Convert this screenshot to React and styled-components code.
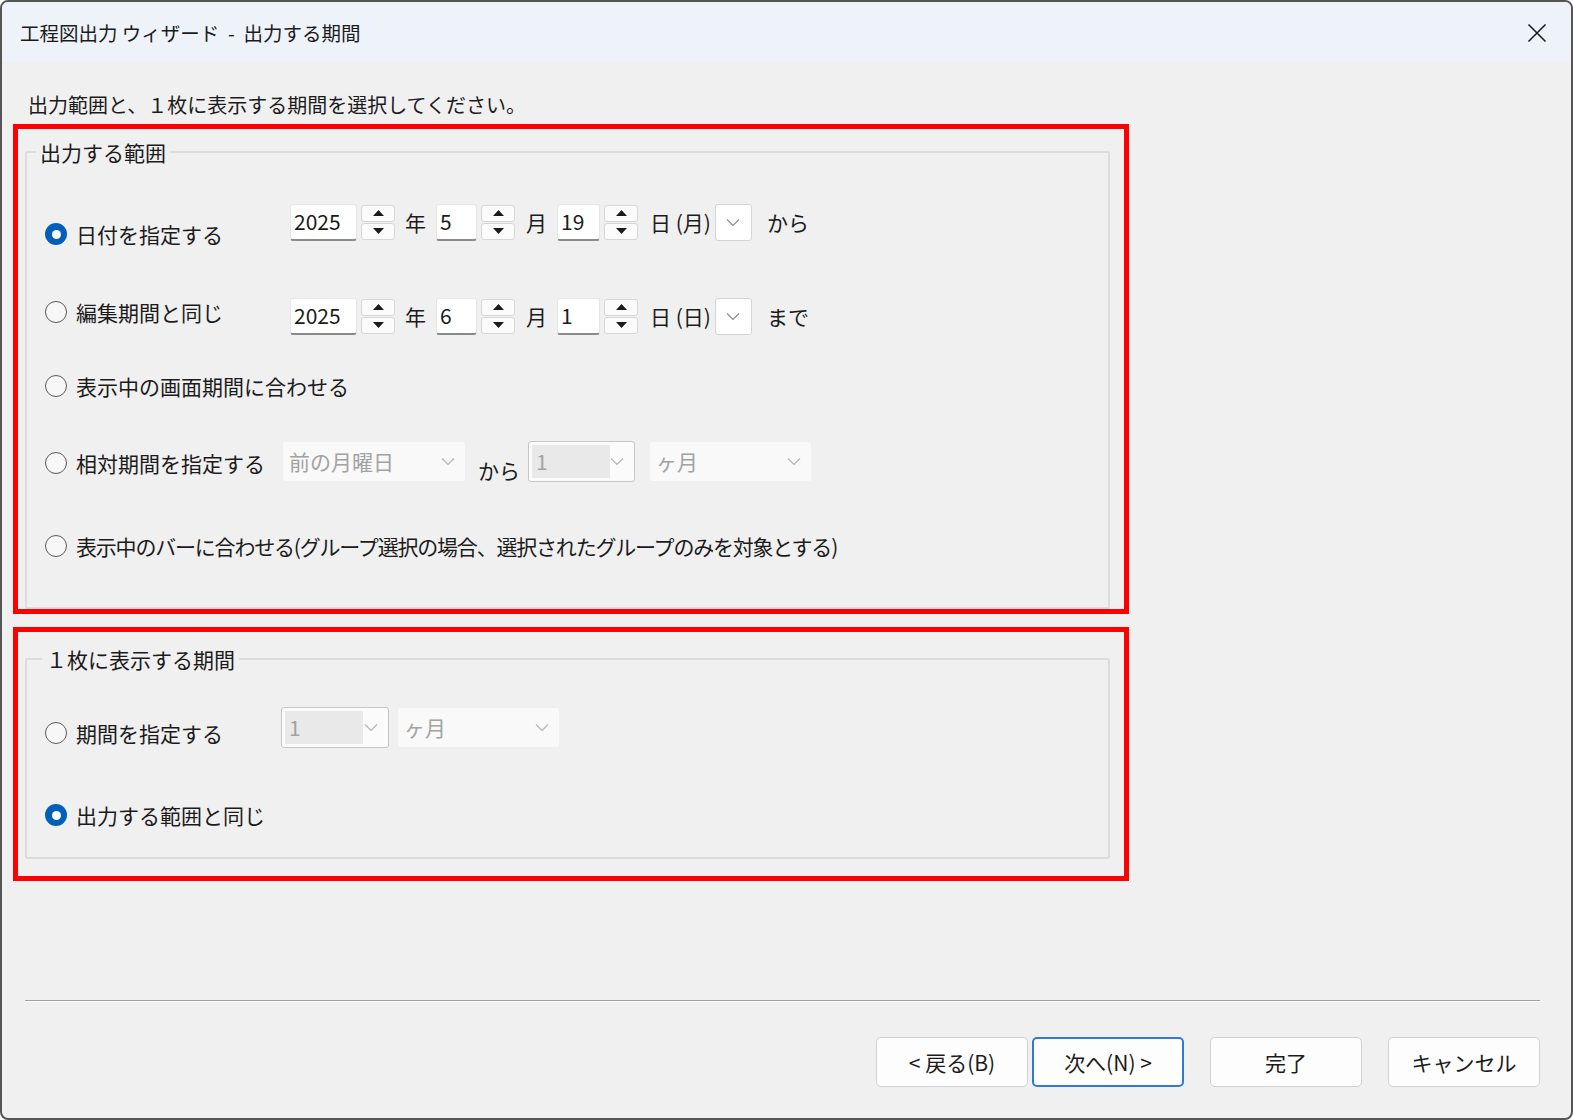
import React from 'react'
import styled, { createGlobalStyle } from 'styled-components'

const GlobalStyle = createGlobalStyle`
  html, body {
    margin: 0;
    padding: 0;
    background: #ffffff;
  }
  body {
    font-family: "Noto Sans CJK JP", "Noto Sans", sans-serif;
    color: #1b1b1b;
  }
`

const Window = styled.div`
  box-sizing: border-box;
  width: 1573px;
  height: 1120px;
  border: 2px solid #555555;
  border-radius: 8px;
  background: #f0f0f0;
  display: flex;
  flex-direction: column;
  overflow: hidden;
`

const TitleBar = styled.div`
  height: 60px;
  flex-shrink: 0;
  background: #eef3f9;
  display: flex;
  align-items: center;
  justify-content: space-between;
  padding: 0 22px 0 18px;
`

const Title = styled.div`
  font-size: 19.5px;
  line-height: 28px;
  margin-top: 2px;
  color: #1b1b1b;
  white-space: pre;
`

const CloseButton = styled.div`
  width: 24px;
  height: 24px;
  display: flex;
  align-items: center;
  justify-content: center;
  margin-top: 2px;
`

const Body = styled.div`
  flex: 1;
  display: flex;
  flex-direction: column;
  padding: 0 31px 0 11px;
`

const Instruction = styled.div`
  font-size: 20px;
  line-height: 28px;
  margin: 29px 0 5px 15px;
`

const RedFrame = styled.div`
  box-sizing: border-box;
  width: 1116px;
  height: ${p => p.$h}px;
  border: 5px solid #ff0000;
  padding: ${p => p.$top}px 14px 0 7px;
  margin-top: ${p => p.$mt || 0}px;
`

const Group = styled.fieldset`
  margin: 0;
  padding: 0 0 ${p => p.$pb}px 0;
  min-inline-size: 0;
  border: 2px solid #dcdcdc;
  border-radius: 2px;
`

const Legend = styled.legend`
  font-size: 21px;
  line-height: 28px;
  padding: 0 4px;
  margin-left: ${p => p.$ml}px;
  color: #1b1b1b;
`

const Row = styled.div`
  height: 40px;
  margin-top: ${p => p.$mt}px;
  padding-left: 18px;
  display: flex;
  align-items: center;
`

const RadioLabel = styled.div`
  display: flex;
  align-items: center;
  gap: 9px;
  flex-shrink: 0;
  width: ${p => (p.$w ? `${p.$w}px` : 'auto')};
  margin-top: ${p => Math.max(0, p.$shift || 0) * 2}px;
  margin-bottom: ${p => Math.max(0, -(p.$shift || 0)) * 2}px;
  font-size: 21px;
  line-height: 28px;
  letter-spacing: ${p => (p.$tight ? '-1.2px' : '0')};
  white-space: nowrap;
`

const RadioCircle = styled.span`
  box-sizing: border-box;
  width: 22px;
  height: 22px;
  border-radius: 50%;
  flex-shrink: 0;
  display: flex;
  align-items: center;
  justify-content: center;
  border: ${p => (p.$on ? '0' : '1.5px solid #5a5a5a')};
  background: ${p => (p.$on ? '#005fb8' : '#f7f7f7')};

  &::after {
    content: '';
    display: ${p => (p.$on ? 'block' : 'none')};
    width: 9px;
    height: 9px;
    border-radius: 50%;
    background: #ffffff;
  }
`

const NumBox = styled.div`
  box-sizing: border-box;
  width: ${p => p.$w}px;
  height: 37px;
  background: #ffffff;
  border: 1px solid #e6e6e6;
  border-bottom: 2px solid #8a8a8a;
  border-radius: 3px;
  font-size: 21px;
  line-height: 33px;
  padding-left: 3px;
  color: #1b1b1b;
`

const Spinner = styled.div`
  display: flex;
  flex-direction: column;
  gap: 1px;
  margin-left: 4px;
`

const SpinButton = styled.div`
  box-sizing: border-box;
  width: 34px;
  height: 17px;
  background: #fbfbfb;
  border: 1px solid #d6d6d6;
  border-radius: 3px;
  display: flex;
  align-items: center;
  justify-content: center;
`

const Unit = styled.span`
  font-size: 21px;
  line-height: 28px;
  margin: 0 ${p => p.$r ?? 10}px 0 ${p => p.$l ?? 10}px;
  white-space: nowrap;
`

const DropButton = styled.div`
  box-sizing: border-box;
  width: 37px;
  height: 37px;
  background: #ffffff;
  border: 1px solid #d4d4d4;
  border-radius: 3px;
  display: flex;
  align-items: center;
  justify-content: center;
`

const Select = styled.div`
  box-sizing: border-box;
  width: ${p => p.$w}px;
  height: 41px;
  background: ${p => (p.$framed ? '#fbfbfb' : '#f9f9f9')};
  border: 1px solid ${p => (p.$framed ? '#c6c6c6' : '#efefef')};
  border-radius: 3px;
  display: flex;
  align-items: center;
  justify-content: space-between;
  padding: ${p => (p.$framed ? '3px 10px 3px 3px' : '0 10px 0 6px')};
  margin-right: ${p => p.$mr || 0}px;
  flex-shrink: 0;
`

const SelectText = styled.span`
  font-size: 21px;
  line-height: 28px;
  color: #a2a2a2;
  ${p => p.$boxed && `
    align-self: stretch;
    width: 74px;
    background: #e9e9e9;
    padding-left: 4px;
    display: flex;
    align-items: center;
  `}
`

const Joiner = styled.span`
  font-size: 21px;
  line-height: 28px;
  margin: 18px 8px 0 12px;
`

const Separator = styled.div`
  margin: 119px 0 0 12px;
  height: 0;
  border-top: 1px solid #a0a0a0;
  border-bottom: 1px solid #ffffff;
`

const ButtonRow = styled.div`
  display: flex;
  justify-content: flex-end;
  margin-top: 35px;
`

const Button = styled.div`
  box-sizing: border-box;
  width: 152px;
  height: 50px;
  margin-left: ${p => p.$ml}px;
  background: #fdfdfd;
  border: ${p => (p.$primary ? '2px solid #2f7bd0' : '1px solid #d0d0d0')};
  border-radius: 5px;
  display: flex;
  align-items: center;
  justify-content: center;
  font-size: 21px;
  line-height: 28px;
  color: #1b1b1b;
  white-space: pre;
`

function Chevron({ color = '#8a8a8a' }) {
  return (
    <svg width="14" height="9" viewBox="0 0 14 9">
      <path d="M1 1.5 L7 7.5 L13 1.5" fill="none" stroke={color} strokeWidth="1.2" />
    </svg>
  )
}

function Triangle({ up }) {
  return (
    <svg width="11" height="6" viewBox="0 0 11 6">
      <path d={up ? 'M0 6 L5.5 0 L11 6 Z' : 'M0 0 L5.5 6 L11 0 Z'} fill="#1b1b1b" />
    </svg>
  )
}

function Radio({ on, children, w, shift, tight }) {
  return (
    <RadioLabel $w={w} $shift={shift} $tight={tight}>
      <RadioCircle $on={on} />
      {children}
    </RadioLabel>
  )
}

function Spin({ value, w }) {
  return (
    <>
      <NumBox $w={w}>{value}</NumBox>
      <Spinner>
        <SpinButton><Triangle up /></SpinButton>
        <SpinButton><Triangle /></SpinButton>
      </Spinner>
    </>
  )
}

function DateFields({ y, m, d, wd, tail }) {
  return (
    <>
      <Spin value={y} w={67} />
      <Unit>年</Unit>
      <Spin value={m} w={41} />
      <Unit $l={11}>月</Unit>
      <Spin value={d} w={43} />
      <Unit $l={12} $r={4}>日 ({wd})</Unit>
      <DropButton><Chevron /></DropButton>
      <Unit $l={15}>{tail}</Unit>
    </>
  )
}

function Dropdown({ w, text, framed, mr }) {
  return (
    <Select $w={w} $framed={framed} $mr={mr}>
      <SelectText $boxed={framed}>{text}</SelectText>
      <Chevron color="#b4b4b4" />
    </Select>
  )
}

export default function App() {
  return (
    <>
      <GlobalStyle />
      <Window>
        <TitleBar>
          <Title>{'工程図出力 ウィザード  -  出力する期間'}</Title>
          <CloseButton>
            <svg width="20" height="20" viewBox="0 0 20 20">
              <path d="M1.5 1.5 L18.5 18.5 M18.5 1.5 L1.5 18.5" stroke="#1b1b1b" strokeWidth="1.6" />
            </svg>
          </CloseButton>
        </TitleBar>

        <Body>
          <Instruction>出力範囲と、１枚に表示する期間を選択してください。</Instruction>

          <RedFrame $h={490} $top={9}>
            <Group $pb={41}>
              <Legend $ml={9}>出力する範囲</Legend>
              <Row $mt={36}>
                <Radio on w={245} shift={12}>日付を指定する</Radio>
                <DateFields y="2025" m="5" d="19" wd="月" tail="から" />
              </Row>
              <Row $mt={54}>
                <Radio w={245} shift={-4}>編集期間と同じ</Radio>
                <DateFields y="2025" m="6" d="1" wd="日" tail="まで" />
              </Row>
              <Row $mt={30}>
                <Radio>表示中の画面期間に合わせる</Radio>
              </Row>
              <Row $mt={35}>
                <Radio w={237} shift={2}>相対期間を指定する</Radio>
                <Dropdown w={184} text="前の月曜日" />
                <Joiner>から</Joiner>
                <Dropdown w={107} text="1" framed mr={14} />
                <Dropdown w={163} text="ヶ月" />
              </Row>
              <Row $mt={45}>
                <Radio tight>表示中のバーに合わせる(グループ選択の場合、選択されたグループのみを対象とする)</Radio>
              </Row>
            </Group>
          </RedFrame>

          <RedFrame $h={254} $top={13} $mt={13}>
            <Group $pb={22}>
              <Legend $ml={15}>１枚に表示する期間</Legend>
              <Row $mt={34}>
                <Radio w={236} shift={6}>期間を指定する</Radio>
                <Dropdown w={108} text="1" framed mr={8} />
                <Dropdown w={163} text="ヶ月" />
              </Row>
              <Row $mt={48}>
                <Radio on>出力する範囲と同じ</Radio>
              </Row>
            </Group>
          </RedFrame>

          <Separator />

          <ButtonRow>
            <Button $ml={0}>{'< 戻る(B)'}</Button>
            <Button $ml={4} $primary>{'次へ(N) >'}</Button>
            <Button $ml={26}>完了</Button>
            <Button $ml={26}>キャンセル</Button>
          </ButtonRow>
        </Body>
      </Window>
    </>
  )
}
